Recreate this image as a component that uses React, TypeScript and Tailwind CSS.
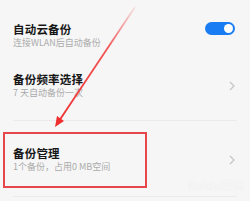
const font = { fontFamily: '"Noto Sans CJK SC", "Noto Sans", sans-serif' };

const Chevron = () => (
  <svg width="6" height="10" viewBox="0 0 6 10" className="shrink-0">
    <path d="M1 1l4 4-4 4" fill="none" stroke="#c4c4c4" strokeWidth="1.2" />
  </svg>
);

const Row = ({ title, sub, right }: { title: string; sub: string; right: React.ReactNode }) => (
  <div className="flex items-center justify-between">
    <div className="flex flex-col">
      <span className="text-[11.5px] leading-[14px] font-bold text-[#161616] tracking-[0.2px]">{title}</span>
      <span className="mt-[1px] text-[9px] leading-[12px] text-[#ababab]">{sub}</span>
    </div>
    {right}
  </div>
);

export default function App() {
  return (
    <div className="relative w-[250px] h-[201px] overflow-hidden bg-[#f6f6f6]" style={font}>
      <div className="pt-[22px] pl-[13px] pr-[15px]">
        <Row
          title="自动云备份"
          sub="连接WLAN后自动备份"
          right={
            <div className="mt-[-14px] w-[30px] h-[13px] rounded-full bg-[#1a7cf2] flex items-center justify-end pr-[2px]">
              <div className="w-[9px] h-[9px] rounded-full bg-white" />
            </div>
          }
        />
        <div className="mt-[23px]">
          <Row title="备份频率选择" sub="7 天自动备份一次" right={<Chevron />} />
        </div>
      </div>
      <div className="mt-[21px] mx-[13px] h-px bg-[#ebebeb]" />
      <div className="mt-[25px] pl-[13px] pr-[15px]">
        <Row title="备份管理" sub="1个备份，占用0 MB空间" right={<Chevron />} />
      </div>
      <div className="mt-[23px] mx-[13px] h-px bg-[#ebebeb]" />

      {/* annotation */}
      <div className="absolute left-[3px] top-[132px] w-[144px] h-[56px] border-2 border-[#e5474c]" />
      <div className="absolute right-[6px] top-[176px] text-[12px] font-bold text-[#f3f3f3] tracking-tight">Baidu经验</div>
      <svg className="absolute left-0 top-0" width="250" height="201">
        <defs>
          <linearGradient id="ln" x1="135" y1="7" x2="58" y2="122" gradientUnits="userSpaceOnUse">
            <stop offset="0" stopColor="#ef3b3b" stopOpacity="0.1" />
            <stop offset="0.35" stopColor="#ef3b3b" stopOpacity="0.85" />
            <stop offset="1" stopColor="#ef2f2f" />
          </linearGradient>
        </defs>
        <line x1="135" y1="7" x2="59" y2="121" stroke="url(#ln)" strokeWidth="1.8" />
        <polygon points="55,127 64,121 57,116" fill="#ef2f2f" />
      </svg>
    </div>
  );
}
